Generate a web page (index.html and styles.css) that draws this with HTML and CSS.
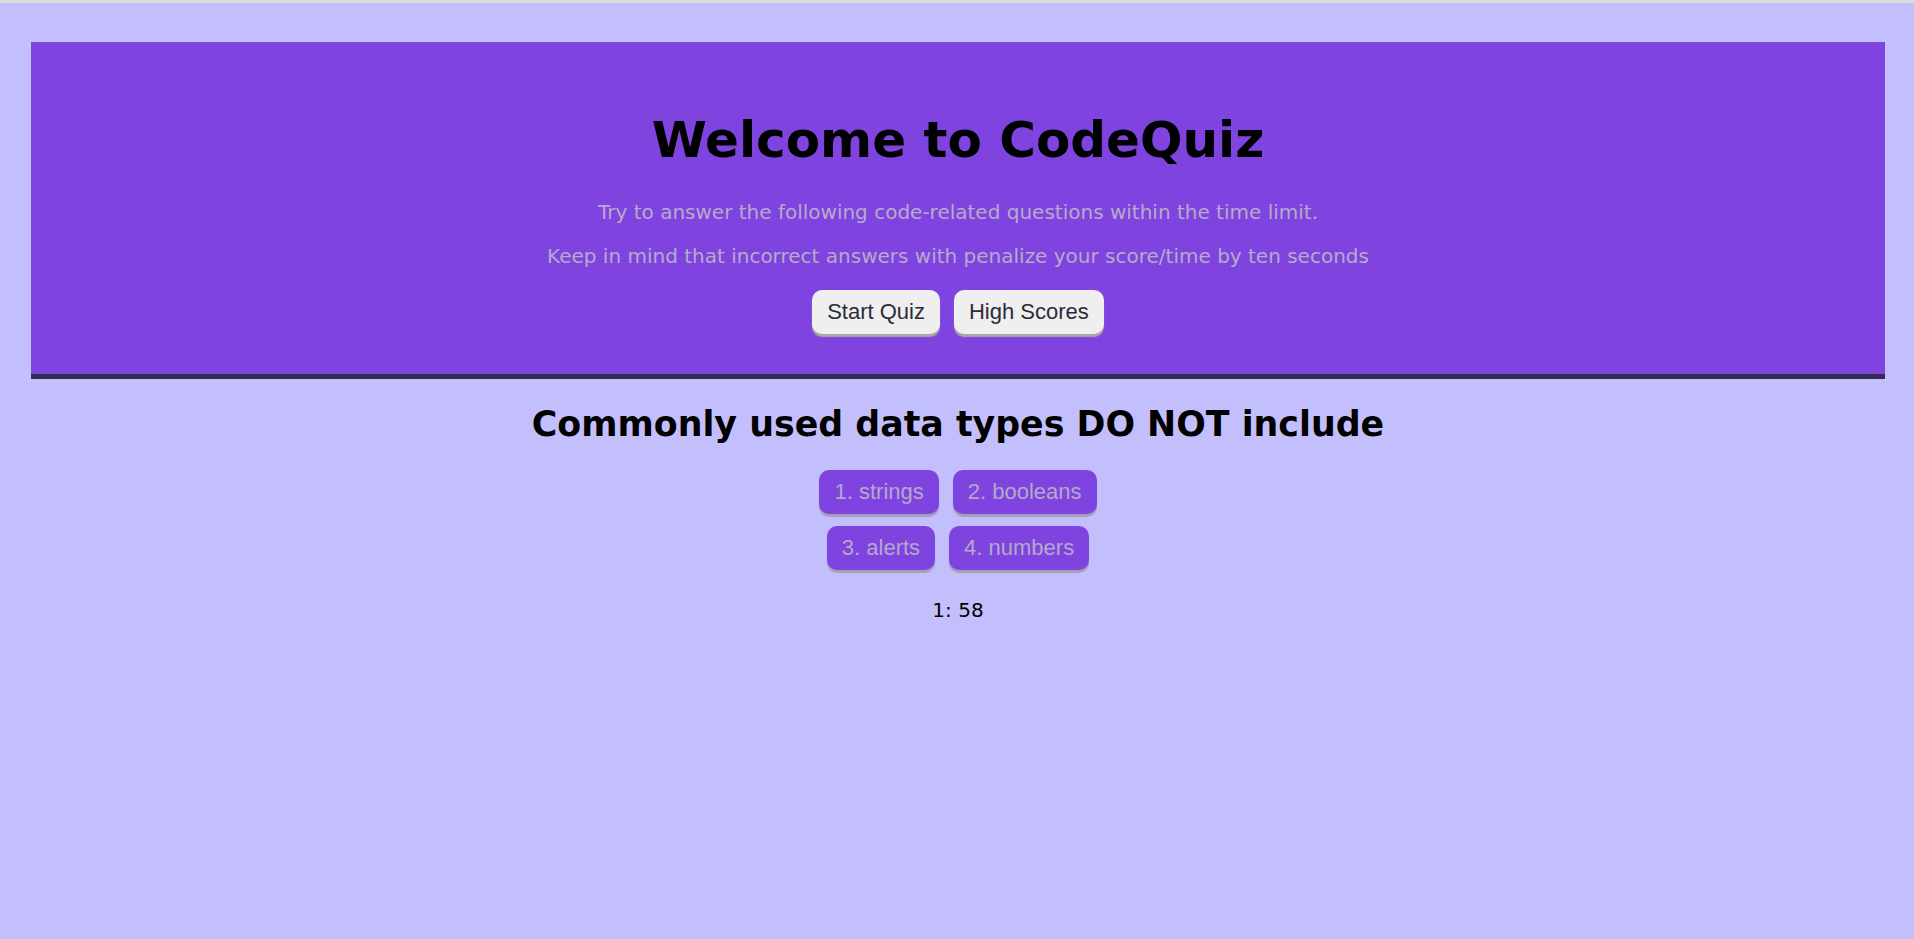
FILE: index.html
```html
<!DOCTYPE html>
<html lang="en">
<head>
<meta charset="utf-8">
<title>CodeQuiz</title>
<link rel="stylesheet" href="styles.css">
</head>
<body>
  <header class="intro">
    <h1 class="intro-title">Welcome to CodeQuiz</h1>
    <p class="intro-text">Try to answer the following code-related questions within the time limit.</p>
    <p class="intro-text">Keep in mind that incorrect answers with penalize your score/time by ten seconds</p>
    <div class="intro-actions">
      <button class="btn btn-light">Start Quiz</button>
      <button class="btn btn-light">High Scores</button>
    </div>
  </header>
  <main class="quiz">
    <h2 class="question">Commonly used data types DO NOT include</h2>
    <div class="answers">
      <div class="answer-row">
        <button class="btn btn-answer">1. strings</button>
        <button class="btn btn-answer">2. booleans</button>
      </div>
      <div class="answer-row">
        <button class="btn btn-answer">3. alerts</button>
        <button class="btn btn-answer">4. numbers</button>
      </div>
    </div>
    <p class="timer">1: 58</p>
  </main>
</body>
</html>
```
FILE: styles.css
```css
html {
  background: #c3bffd;
}

body {
  margin: 0;
  border-top: 3px solid #dcdce0;
  background: #c3bffd;
  font-family: "DejaVu Sans", Verdana, sans-serif;
  color: #000;
  min-height: 936px;
}

.intro {
  margin: 39px 29px 0 31px;
  padding: 35px 0 40px;
  background: #7f44e0;
  border-bottom: 5px solid #332a55;
  text-align: center;
}

.intro-title {
  margin: 33.5px 0 31px;
  font-size: 50px;
  font-weight: bold;
  line-height: normal;
}

.intro-text {
  margin: 20px 0;
  font-size: 20px;
  line-height: normal;
  color: #b8aac9;
}

.intro-actions {
  display: flex;
  justify-content: center;
  gap: 14px;
  padding-top: 2px;
}

.btn {
  font-family: "Liberation Sans", Arial, sans-serif;
  font-size: 22px;
  line-height: 26px;
  padding: 9px 15px;
  border: none;
  border-radius: 10px;
  cursor: pointer;
}

.btn-light {
  background: #efefef;
  color: #2b2b3a;
  box-shadow: 0 3px 1px #a9a6ad;
}

.quiz {
  margin: 0 29px 0 31px;
  text-align: center;
}

.question {
  margin: 25.5px 0 26px;
  font-size: 34.8px;
  font-weight: bold;
  line-height: normal;
}

.answers {
  display: flex;
  flex-direction: column;
  gap: 12px;
}

.answer-row {
  display: flex;
  justify-content: center;
  gap: 14px;
}

.btn-answer {
  background: #7f44e0;
  color: #b5a9c9;
  box-shadow: 0 3px 1px #a79fba;
}

.timer {
  margin: 28px 0 0;
  font-size: 20px;
  line-height: normal;
}
```
